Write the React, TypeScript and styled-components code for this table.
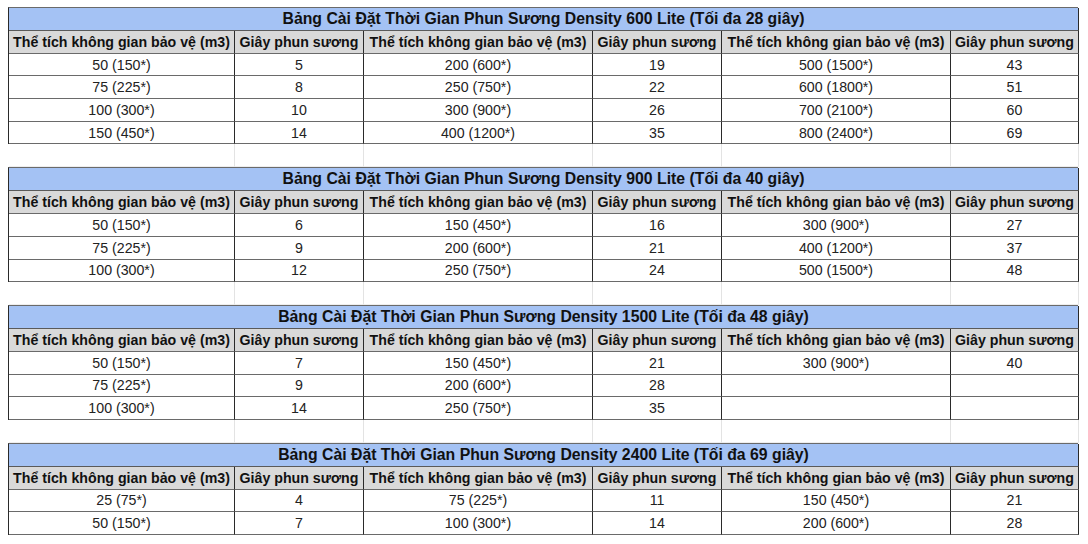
import React from "react";
import styled, { createGlobalStyle } from "styled-components";

const Global = createGlobalStyle`
  html, body { margin: 0; padding: 0; background: #ffffff; }
  body { font-family: "Liberation Sans", Arial, sans-serif; color: #222; }
`;

const COLS = "226px 129px 229px 129px 229px 128px";

const Page = styled.div`
  padding: 7px 0 0 8px;
  display: flex;
  flex-direction: column;
  width: 1070px;
`;

const Table = styled.div`
  display: grid;
  grid-template-columns: ${COLS};
  border-left: 1px solid #2a2a2a;
  border-top: 1px solid #6a6a6a;
`;

const Title = styled.div`
  grid-column: 1 / -1;
  height: 22px;
  display: flex;
  align-items: center;
  justify-content: center;
  background: #a4c2f4;
  border-right: 1px solid #2a2a2a;
  border-bottom: 1px solid #5a5a5a;
  font-weight: bold;
  font-size: 15.8px;
  color: #111;
`;

const Cell = styled.div<{ $head?: boolean }>`
  height: 21.7px;
  display: flex;
  align-items: center;
  justify-content: center;
  white-space: nowrap;
  overflow: hidden;
  background: ${(p) => (p.$head ? "#d9d9d9" : "#ffffff")};
  border-right: 1px solid #2a2a2a;
  border-bottom: 1px solid #6a6a6a;
  font-weight: ${(p) => (p.$head ? "bold" : "normal")};
  font-size: 14.2px;
  color: ${(p) => (p.$head ? "#111" : "#222")};
`;

const Gap = styled.div`
  display: grid;
  grid-template-columns: ${COLS};
  height: 23px;
  padding-left: 1px;
`;

const GapCell = styled.div`
  border-right: 1px solid #e3e3e3;
  border-bottom: 1px solid #eeeeee;
`;

const HEAD = [
  "Thể tích không gian bảo vệ (m3)",
  "Giây phun sương",
  "Thể tích không gian bảo vệ (m3)",
  "Giây phun sương",
  "Thể tích không gian bảo vệ (m3)",
  "Giây phun sương",
];

const tables: { title: string; rows: string[][] }[] = [
  {
    title: "Bảng Cài Đặt Thời Gian Phun Sương Density 600 Lite (Tối đa 28 giây)",
    rows: [
      ["50 (150*)", "5", "200 (600*)", "19", "500 (1500*)", "43"],
      ["75 (225*)", "8", "250 (750*)", "22", "600 (1800*)", "51"],
      ["100 (300*)", "10", "300 (900*)", "26", "700 (2100*)", "60"],
      ["150 (450*)", "14", "400 (1200*)", "35", "800 (2400*)", "69"],
    ],
  },
  {
    title: "Bảng Cài Đặt Thời Gian Phun Sương Density 900 Lite (Tối đa 40 giây)",
    rows: [
      ["50 (150*)", "6", "150 (450*)", "16", "300 (900*)", "27"],
      ["75 (225*)", "9", "200 (600*)", "21", "400 (1200*)", "37"],
      ["100 (300*)", "12", "250 (750*)", "24", "500 (1500*)", "48"],
    ],
  },
  {
    title: "Bảng Cài Đặt Thời Gian Phun Sương Density 1500 Lite (Tối đa 48 giây)",
    rows: [
      ["50 (150*)", "7", "150 (450*)", "21", "300 (900*)", "40"],
      ["75 (225*)", "9", "200 (600*)", "28", "", ""],
      ["100 (300*)", "14", "250 (750*)", "35", "", ""],
    ],
  },
  {
    title: "Bảng Cài Đặt Thời Gian Phun Sương Density 2400 Lite (Tối đa 69 giây)",
    rows: [
      ["25 (75*)", "4", "75 (225*)", "11", "150 (450*)", "21"],
      ["50 (150*)", "7", "100 (300*)", "14", "200 (600*)", "28"],
    ],
  },
];

export default function App() {
  return (
    <>
      <Global />
      <Page>
        {tables.map((t, ti) => (
          <React.Fragment key={ti}>
            {ti > 0 && (
              <Gap>
                {HEAD.map((_, i) => (
                  <GapCell key={i} />
                ))}
              </Gap>
            )}
            <Table>
              <Title>{t.title}</Title>
              {HEAD.map((h, i) => (
                <Cell $head key={"h" + i}>
                  {h}
                </Cell>
              ))}
              {t.rows.map((r, ri) =>
                r.map((c, ci) => <Cell key={ri + "-" + ci}>{c}</Cell>)
              )}
            </Table>
          </React.Fragment>
        ))}
      </Page>
    </>
  );
}
